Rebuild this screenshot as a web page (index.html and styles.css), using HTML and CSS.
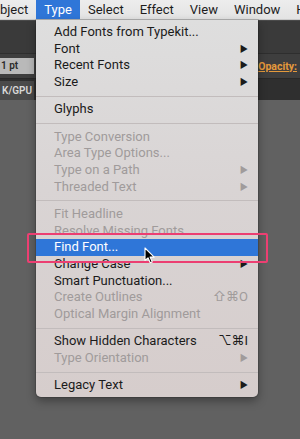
FILE: index.html
```html
<!DOCTYPE html>
<html lang="en">
<head>
  <meta charset="UTF-8" />
  <meta name="viewport" content="width=device-width, initial-scale=1.0">
  <title>Type Menu</title>
  <link rel="stylesheet" href="styles.css">
</head>
<body>
  <div class="screen">
    <!-- Menu bar -->
    <div class="menubar">
      <span class="mb-item mb-first">Object</span>
      <span class="mb-item active">Type</span>
      <span class="mb-item">Select</span>
      <span class="mb-item">Effect</span>
      <span class="mb-item">View</span>
      <span class="mb-item">Window</span>
      <span class="mb-item">Help</span>
    </div>

    <!-- App chrome behind the menu -->
    <div class="appbar"></div>
    <div class="controlbar">
      <div class="stroke-field">1 pt</div>
      <span class="opacity">Opacity:</span>
    </div>
    <div class="tabbar">
      <div class="doc-tab">K/GPU</div>
    </div>
    <div class="canvas"></div>

    <!-- Type dropdown -->
    <div class="menu">
      <div class="item">Add Fonts from Typekit...</div>
      <div class="item">Font<span class="arrow">▶</span></div>
      <div class="item">Recent Fonts<span class="arrow">▶</span></div>
      <div class="item">Size<span class="arrow">▶</span></div>
      <div class="sep"></div>
      <div class="item">Glyphs</div>
      <div class="sep"></div>
      <div class="item disabled">Type Conversion</div>
      <div class="item disabled">Area Type Options...</div>
      <div class="item disabled">Type on a Path<span class="arrow">▶</span></div>
      <div class="item disabled">Threaded Text<span class="arrow">▶</span></div>
      <div class="sep"></div>
      <div class="item disabled">Fit Headline</div>
      <div class="item disabled">Resolve Missing Fonts</div>
      <div class="item selected">Find Font...</div>
      <div class="item">Change Case<span class="arrow">▶</span></div>
      <div class="item">Smart Punctuation...</div>
      <div class="item disabled">Create Outlines<span class="shortcut">⇧⌘O</span></div>
      <div class="item disabled">Optical Margin Alignment</div>
      <div class="sep"></div>
      <div class="item">Show Hidden Characters<span class="shortcut">⌥⌘I</span></div>
      <div class="item disabled">Type Orientation<span class="arrow">▶</span></div>
      <div class="sep"></div>
      <div class="item">Legacy Text<span class="arrow">▶</span></div>
    </div>

    <!-- Highlight callout and pointer -->
    <div class="callout"></div>
    <svg class="cursor" width="12" height="17" viewBox="0 0 12 17">
      <path d="M1 1 L1 13.5 L4 10.8 L6.2 15.8 L8.2 14.9 L6.1 10.1 L10.2 10.1 Z" fill="#000" stroke="#fff" stroke-width="1.1" stroke-linejoin="round"/>
    </svg>
  </div>
</body>
</html>
```

FILE: styles.css
```css
:root {
  --menu-text: #1b1b1b;
  --menu-disabled: #a09b9b;
  --highlight: #2f76d8;
  --callout: #ec3f72;
  --canvas: #616161;
}

* {
  box-sizing: border-box;
  margin: 0;
  padding: 0;
}

body {
  font-family: 'Roboto', 'Inter', system-ui, sans-serif;
  background-color: var(--canvas);
  width: 300px;
  height: 439px;
  overflow: hidden;
}

.screen {
  position: relative;
  width: 300px;
  height: 439px;
  overflow: hidden;
  display: flex;
  flex-direction: column;
}

/* Menu bar */
.menubar {
  height: 20px;
  flex: none;
  display: flex;
  align-items: stretch;
  background: linear-gradient(#ededed, #e3e3e3);
  border-bottom: 1px solid #c9c9c9;
  white-space: nowrap;
  font-size: 13px;
  color: #1d1d1d;
}

.mb-item {
  padding: 0 8px;
  line-height: 19px;
}

.mb-first {
  margin-left: -17px;
}

.mb-item.active {
  background-color: var(--highlight);
  color: #fff;
}

/* Application chrome */
.appbar {
  height: 33px;
  flex: none;
  background-color: #3a3a3a;
  border-top: 1px solid #4a4a4a;
}

.controlbar {
  height: 25px;
  flex: none;
  background-color: #3e3e3e;
  border-top: 1px solid #2e2e2e;
  display: flex;
  align-items: center;
  justify-content: space-between;
}

.stroke-field {
  width: 34px;
  height: 16px;
  background-color: #b9b9b9;
  color: #2a2a2a;
  font-size: 10px;
  font-weight: 600;
  line-height: 16px;
  padding-left: 1px;
}

.opacity {
  color: #e59a3c;
  font-size: 10.5px;
  font-weight: 700;
  text-decoration: underline;
  margin-right: 3px;
}

.tabbar {
  height: 22px;
  flex: none;
  background-color: #2f2f2f;
  border-top: 1px solid #292929;
  display: flex;
  align-items: flex-end;
}

.doc-tab {
  width: 34px;
  height: 19px;
  background-color: #4a4a4a;
  color: #d8d8d8;
  font-size: 10px;
  font-weight: 600;
  line-height: 19px;
  text-align: right;
  padding-right: 2px;
  overflow: hidden;
  white-space: nowrap;
}

.canvas {
  flex: 1;
  background-color: var(--canvas);
}

/* Dropdown menu */
.menu {
  position: absolute;
  left: 36px;
  top: 20px;
  width: 222px;
  padding: 4px 0 3px;
  background: linear-gradient(#dedede, #d9d4d4 45%, #d6cdcc);
  border-radius: 0 0 5px 5px;
  box-shadow: 0 4px 10px rgba(0, 0, 0, 0.35), 0 0 0 1px rgba(0, 0, 0, 0.12);
  font-size: 13px;
  color: var(--menu-text);
}

.item {
  height: 16.7px;
  line-height: 16.7px;
  padding: 0 10px 0 18px;
  display: flex;
  align-items: center;
  white-space: nowrap;
}

.item.disabled {
  color: var(--menu-disabled);
}

.item.selected {
  background-color: var(--highlight);
  color: #fff;
}

.arrow {
  margin-left: auto;
  font-size: 9px;
}

.shortcut {
  margin-left: auto;
}

.sep {
  height: 1px;
  margin: 4.8px 0;
  background-color: #c2bcbc;
}

/* Callout and pointer */
.callout {
  position: absolute;
  left: 27px;
  top: 233px;
  width: 241px;
  height: 30px;
  border: 2.5px solid var(--callout);
  border-radius: 2px;
}

.cursor {
  position: absolute;
  left: 144px;
  top: 247px;
}
```
